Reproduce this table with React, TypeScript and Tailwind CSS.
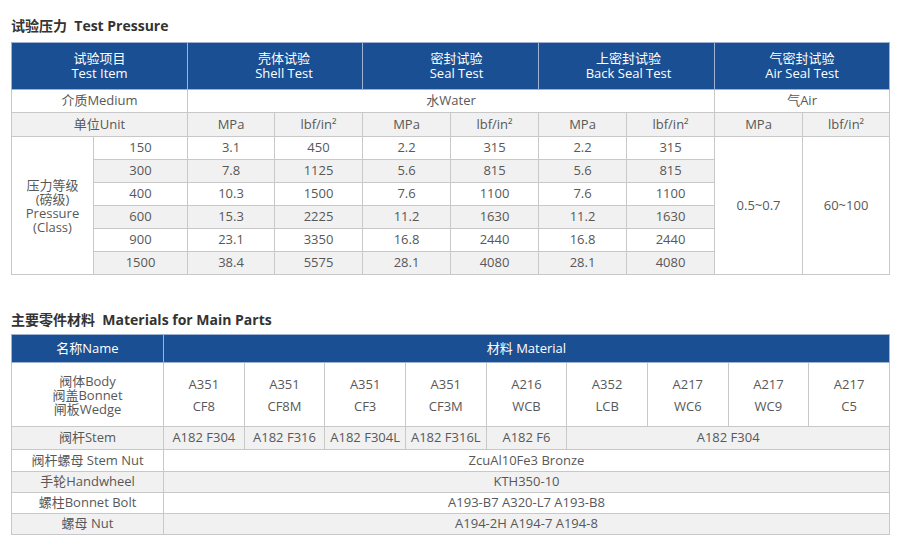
import React from "react";

const bd = "border border-[#c8c8c8]";
const th = "border border-[#9db3d1] bg-[#1a4f93] text-white font-normal text-[13px] leading-[15px] text-center align-middle";

const pressure = [
  ["150", "3.1", "450", "2.2", "315", "2.2", "315"],
  ["300", "7.8", "1125", "5.6", "815", "5.6", "815"],
  ["400", "10.3", "1500", "7.6", "1100", "7.6", "1100"],
  ["600", "15.3", "2225", "11.2", "1630", "11.2", "1630"],
  ["900", "23.1", "3350", "16.8", "2440", "16.8", "2440"],
  ["1500", "38.4", "5575", "28.1", "4080", "28.1", "4080"],
];

const mats = [
  ["A351", "CF8"],
  ["A351", "CF8M"],
  ["A351", "CF3"],
  ["A351", "CF3M"],
  ["A216", "WCB"],
  ["A352", "LCB"],
  ["A217", "WC6"],
  ["A217", "WC9"],
  ["A217", "C5"],
];

function Title({ children }: { children: React.ReactNode }) {
  return (
    <div className="text-[14px] leading-[18px] font-bold text-[#333333]">{children}</div>
  );
}

export default function App() {
  return (
    <div className="w-[900px] h-[549px] bg-white px-[11px] pt-[17px] font-['Open_Sans','Noto_Sans_CJK_SC',sans-serif] text-[#585858]">
      <Title>试验压力&nbsp; Test Pressure</Title>
      <table className="mt-[7px] w-[878px] table-fixed border-collapse text-[13px] text-center">
        <colgroup>
          <col className="w-[82px]" />
          <col className="w-[94px]" />
          <col className="w-[87px]" />
          <col className="w-[88px]" />
          <col className="w-[88px]" />
          <col className="w-[88px]" />
          <col className="w-[88px]" />
          <col className="w-[88px]" />
          <col className="w-[88px]" />
          <col className="w-[87px]" />
        </colgroup>
        <thead>
          <tr className="h-[47px]">
            <th colSpan={2} className={th}>试验项目<br />Test Item</th>
            <th colSpan={2} className={`${th} pl-[18px]`}>壳体试验<br />Shell Test</th>
            <th colSpan={2} className={`${th} pl-[12px]`}>密封试验<br />Seal Test</th>
            <th colSpan={2} className={`${th} pl-[4px]`}>上密封试验<br />Back Seal Test</th>
            <th colSpan={2} className={th}>气密封试验<br />Air Seal Test</th>
          </tr>
        </thead>
        <tbody>
          <tr className="h-[23px] bg-white">
            <td colSpan={2} className={bd}>介质Medium</td>
            <td colSpan={6} className={bd}>水Water</td>
            <td colSpan={2} className={bd}>气Air</td>
          </tr>
          <tr className="h-[24px] bg-[#f1f1f1]">
            <td colSpan={2} className={bd}>单位Unit</td>
            <td className={bd}>MPa</td>
            <td className={bd}>lbf/in²</td>
            <td className={bd}>MPa</td>
            <td className={bd}>lbf/in²</td>
            <td className={bd}>MPa</td>
            <td className={bd}>lbf/in²</td>
            <td className={bd}>MPa</td>
            <td className={bd}>lbf/in²</td>
          </tr>
          {pressure.map((r, i) => (
            <tr key={r[0]} className={`h-[23px] ${i % 2 === 1 ? "bg-[#f1f1f1]" : "bg-white"}`}>
              {i === 0 && (
                <td rowSpan={6} className={`${bd} bg-white leading-[14px]`}>
                  压力等级<br />(磅级)<br />Pressure<br />(Class)
                </td>
              )}
              {r.map((v, j) => (
                <td key={j} className={bd}>{v}</td>
              ))}
              {i === 0 && (
                <>
                  <td rowSpan={6} className={`${bd} bg-white`}>0.5~0.7</td>
                  <td rowSpan={6} className={`${bd} bg-white`}>60~100</td>
                </>
              )}
            </tr>
          ))}
        </tbody>
      </table>

      <div className="mt-[36px]">
        <Title>主要零件材料&nbsp; Materials for Main Parts</Title>
      </div>
      <table className="mt-[5px] w-[878px] table-fixed border-collapse text-[13px] text-center">
        <colgroup>
          <col className="w-[152px]" />
          {mats.map((_, i) => (
            <col key={i} className="w-[80.67px]" />
          ))}
        </colgroup>
        <thead>
          <tr className="h-[28px]">
            <th className={th}>名称Name</th>
            <th colSpan={9} className={th}>材料 Material</th>
          </tr>
        </thead>
        <tbody>
          <tr className="h-[64px] bg-white">
            <td className={`${bd} leading-[14px]`}>阀体Body<br />阀盖Bonnet<br />闸板Wedge</td>
            {mats.map((m, i) => (
              <td key={i} className={`${bd} leading-[22px]`}>{m[0]}<br />{m[1]}</td>
            ))}
          </tr>
          <tr className="h-[23px] bg-[#f1f1f1]">
            <td className={bd}>阀杆Stem</td>
            <td className={bd}>A182 F304</td>
            <td className={bd}>A182 F316</td>
            <td className={`${bd} whitespace-nowrap`}>A182 F304L</td>
            <td className={`${bd} whitespace-nowrap`}>A182 F316L</td>
            <td className={bd}>A182 F6</td>
            <td colSpan={4} className={bd}>A182 F304</td>
          </tr>
          <tr className="h-[22px] bg-white">
            <td className={bd}>阀杆螺母 Stem Nut</td>
            <td colSpan={9} className={bd}>ZcuAl10Fe3 Bronze</td>
          </tr>
          <tr className="h-[21px] bg-[#f1f1f1]">
            <td className={bd}>手轮Handwheel</td>
            <td colSpan={9} className={bd}>KTH350-10</td>
          </tr>
          <tr className="h-[21px] bg-white">
            <td className={bd}>螺柱Bonnet Bolt</td>
            <td colSpan={9} className={bd}>A193-B7 A320-L7 A193-B8</td>
          </tr>
          <tr className="h-[21px] bg-[#f1f1f1]">
            <td className={bd}>螺母 Nut</td>
            <td colSpan={9} className={bd}>A194-2H A194-7 A194-8</td>
          </tr>
        </tbody>
      </table>
    </div>
  );
}
